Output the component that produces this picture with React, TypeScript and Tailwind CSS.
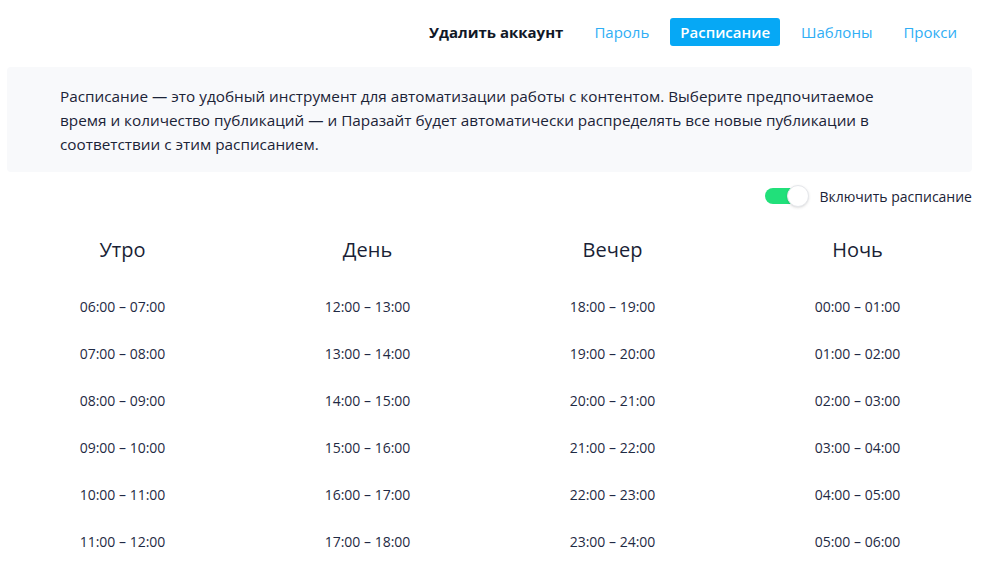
const navItems = ['Удалить аккаунт', 'Пароль', 'Расписание', 'Шаблоны', 'Прокси'];

const columns: { title: string; start: number }[] = [
    { title: 'Утро', start: 6 },
    { title: 'День', start: 12 },
    { title: 'Вечер', start: 18 },
    { title: 'Ночь', start: 0 },
];

const pad = (h: number) => String(h).padStart(2, '0') + ':00';

export default function App() {
    return (
        <div className="min-h-screen bg-white text-[#1b2337]" style={{ fontFamily: '"Open Sans", "Noto Sans", sans-serif' }}>
            <nav className="flex items-center justify-end gap-[11px] pr-[33px] pt-[18px]">
                {navItems.map((item) => {
                    if (item === 'Удалить аккаунт') {
                        return (
                            <span key={item} className="px-[10px] text-[15px] font-bold leading-[28px] text-[#111827]">
                                {item}
                            </span>
                        );
                    }
                    if (item === 'Расписание') {
                        return (
                            <span key={item} className="rounded-[3px] bg-[#06a8f5] px-[10px] text-[15px] font-semibold leading-[28px] text-white">
                                {item}
                            </span>
                        );
                    }
                    return (
                        <span key={item} className="px-[10px] text-[15px] leading-[28px] text-[#30aef5]">
                            {item}
                        </span>
                    );
                })}
            </nav>

            <div className="mx-[7px] mt-[21px] w-[965px] rounded-[4px] bg-[#f8f9fb] pb-[16px] pl-[53px] pt-[17px]">
                <p className="w-[860px] text-[15.3px] leading-[24px] text-[#1b2337]">
                    Расписание — это удобный инструмент для автоматизации работы с контентом. Выберите предпочитаемое время и количество
                    публикаций — и Паразайт будет автоматически распределять все новые публикации в соответствии с этим расписанием.
                </p>
            </div>

            <div className="mt-[13px] flex items-center justify-end pr-[28px]">
                <div className="relative mr-[10px] h-[22px] w-[44px]">
                    <div className="absolute left-0 top-[3px] h-[16px] w-[40px] rounded-full bg-[#21e07a]" />
                    <div className="absolute right-0 top-0 h-[22px] w-[22px] rounded-full border border-[#e5e7eb] bg-white shadow-sm" />
                </div>
                <span className="text-[14px] text-[#1b2337]">Включить расписание</span>
            </div>

            <div className="mt-[29px] grid w-[980px] grid-cols-4">
                {columns.map((col) => (
                    <div key={col.title} className="flex flex-col items-center">
                        <h2 className="text-[20px] leading-[28px] text-[#1a1f36]">{col.title}</h2>
                        <ul className="mt-[33px] flex flex-col items-center gap-[27px]">
                            {Array.from({ length: 6 }, (_, i) => (
                                <li key={i} className="text-[14px] leading-[20px] text-[#1f2a44]">
                                    {pad(col.start + i)} – {pad(col.start + i + 1)}
                                </li>
                            ))}
                        </ul>
                    </div>
                ))}
            </div>
        </div>
    );
}
